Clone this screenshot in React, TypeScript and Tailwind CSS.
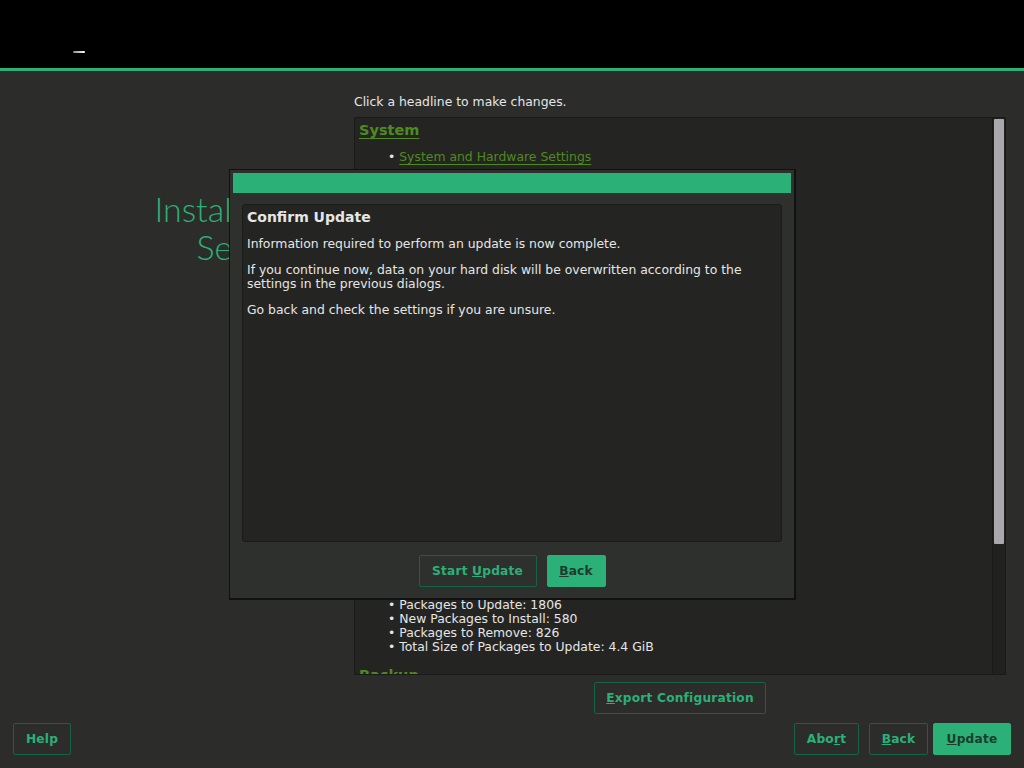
import React from "react";

const font = { fontFamily: '"DejaVu Sans", "Liberation Sans", sans-serif' };

function Btn({ children, primary, className = "" }: { children: React.ReactNode; primary?: boolean; className?: string }) {
  return (
    <button
      className={
        "h-[32px] rounded-[2px] border text-[12.2px] font-bold tracking-[0.2px] " +
        (primary
          ? "bg-[#2bb077] border-[#2bb077] text-[#1f3a2c] "
          : "bg-transparent border-[#17634a] text-[#2bb077] ") +
        className
      }
    >
      {children}
    </button>
  );
}

function Heading({ children, className = "" }: { children: React.ReactNode; className?: string }) {
  return (
    <div className={"text-[14.5px] font-bold text-[#4f8a1f] underline underline-offset-[3px] leading-[20px] " + className}>
      {children}
    </div>
  );
}

export default function App() {
  return (
    <div className="w-[1024px] h-[768px] bg-[#2c2d2b] text-[#e6e6e6] text-[12.4px] relative overflow-hidden flex flex-col" style={font}>
      <div className="h-[68px] bg-black relative shrink-0">
        <div className="absolute left-[73px] top-[51px] w-[12px] h-[2px] bg-gradient-to-r from-[#888] to-white rounded-full" />
      </div>
      <div className="h-[3px] bg-[#2bb077] shrink-0" />
      <div className="flex-1 flex flex-col">
        <div className="flex flex-1">
          <div className="w-[354px] shrink-0 relative">
            <div className="absolute right-[41px] top-[119px] text-right text-[34px] leading-[38px] text-[#2bb077] font-light" style={{ fontFamily: "Lato, 'Open Sans', sans-serif" }}>
              Installation
              <br />
              Settings
            </div>
          </div>
          <div className="w-[652px] flex flex-col">
            <div className="h-[46px] pt-[23px] leading-[15px]">Click a headline to make changes.</div>
            <div className="h-[558px] flex border border-[#1a1b19] rounded-tl-[2px] bg-[#242523]">
              <div className="flex-1 overflow-hidden pl-[4px] pt-[2px]">
                <div className="h-[478px] overflow-hidden">
                  <Heading>System</Heading>
                  <ul className="mt-[10px] ml-[29px] leading-[14px]">
                    <li>• <span className="text-[#4f8a1f] underline underline-offset-[3px]">System and Hardware Settings</span></li>
                  </ul>
                  <Heading className="mt-[12px]">Update Options</Heading>
                  <ul className="mt-[6px] ml-[29px] leading-[14px]">
                    <li>• Update Based on Release</li>
                    <li>• Only Required Packages</li>
                  </ul>
                  <Heading className="mt-[12px]">Packages</Heading>
                </div>
                <ul className="ml-[29px] leading-[14px]">
                  <li>• Packages to Update: 1806</li>
                  <li>• New Packages to Install: 580</li>
                  <li>• Packages to Remove: 826</li>
                  <li>• Total Size of Packages to Update: 4.4 GiB</li>
                </ul>
                <Heading className="mt-[11px]">Backup</Heading>
              </div>
              <div className="w-[13px] bg-[#212220] border-l border-[#1a1b19] pl-[1px] pt-[1px]">
                <div className="w-[10px] h-[425px] bg-[#aaa8ac] rounded-[1px]" />
              </div>
            </div>
            <div className="flex justify-center pt-[7px]">
              <Btn className="w-[172px]"><span className="underline">E</span>xport Configuration</Btn>
            </div>
          </div>
        </div>
        <div className="flex items-center justify-between px-[13px] pb-[13px]">
          <Btn className="w-[58px]">Help</Btn>
          <div className="flex gap-[5px]">
            <Btn className="w-[65px] mr-[5px]">Abo<span className="underline">r</span>t</Btn>
            <Btn className="w-[59px]"><span className="underline">B</span>ack</Btn>
            <Btn primary className="w-[78px]"><span className="underline">U</span>pdate</Btn>
          </div>
        </div>
      </div>

      {/* Dialog */}
      <div className="absolute left-[229px] top-[169px] w-[567px] h-[431px] bg-[#2e302d] border-r-2 border-b-2 border-l border-t border-[#111] flex flex-col p-[2px]">
        <div className="h-[20px] bg-[#2bb077] mx-[1px] mt-[1px] shrink-0" />
        <div className="mx-[10px] mt-[11px] h-[338px] bg-[#242523] border border-[#1a1b19] rounded-[3px] px-[4px] pt-[4px]">
          <div className="font-bold text-[14px] leading-[17px]">Confirm Update</div>
          <p className="mt-[11px] leading-[14px]">Information required to perform an update is now complete.</p>
          <p className="mt-[12px] leading-[14px]">If you continue now, data on your hard disk will be overwritten according to the<br />settings in the previous dialogs.</p>
          <p className="mt-[12px] leading-[14px]">Go back and check the settings if you are unsure.</p>
        </div>
        <div className="flex justify-center gap-[10px] mt-[13px]">
          <Btn className="w-[118px]">Start <span className="underline">U</span>pdate</Btn>
          <Btn primary className="w-[59px]"><span className="underline">B</span>ack</Btn>
        </div>
      </div>
    </div>
  );
}
